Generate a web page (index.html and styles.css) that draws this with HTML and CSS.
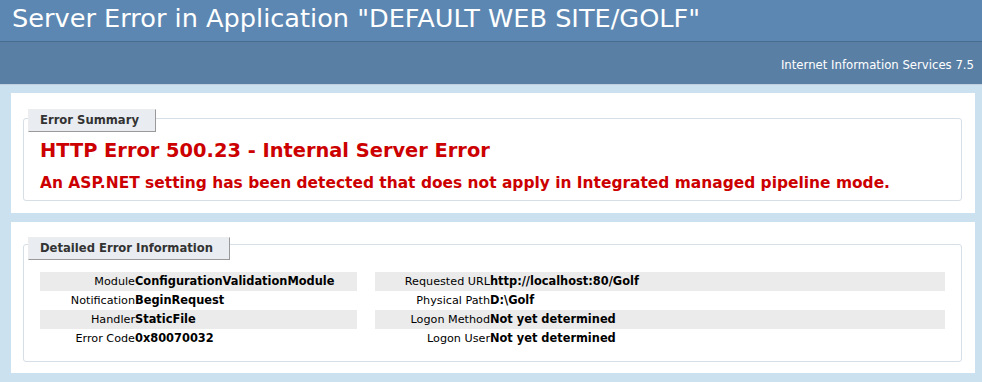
FILE: index.html
```html
<!DOCTYPE html>
<html lang="en">
<head>
  <meta charset="UTF-8" />
  <title>IIS 7.5 Detailed Error - 500.23 - Internal Server Error</title>
  <link rel="stylesheet" href="styles.css">
</head>
<body>
  <div id="header">
    <h1>Server Error in Application "DEFAULT WEB SITE/GOLF"</h1>
  </div>
  <div id="server_version">Internet Information Services 7.5</div>

  <div id="content">
    <div class="summary-container">
      <div class="box">
        <div class="legend">Error Summary</div>
        <h2>HTTP Error 500.23 - Internal Server Error</h2>
        <h3>An ASP.NET setting has been detected that does not apply in Integrated managed pipeline mode.</h3>
      </div>
    </div>

    <div class="content-container">
      <div class="box">
        <div class="legend">Detailed Error Information</div>
        <div class="details">
          <table id="details-left">
            <tr class="alt"><th>Module</th><td>ConfigurationValidationModule</td></tr>
            <tr><th>Notification</th><td>BeginRequest</td></tr>
            <tr class="alt"><th>Handler</th><td>StaticFile</td></tr>
            <tr><th>Error Code</th><td>0x80070032</td></tr>
          </table>
          <table id="details-right">
            <tr class="alt"><th>Requested URL</th><td>http://localhost:80/Golf</td></tr>
            <tr><th>Physical Path</th><td>D:\Golf</td></tr>
            <tr class="alt"><th>Logon Method</th><td>Not yet determined</td></tr>
            <tr><th>Logon User</th><td>Not yet determined</td></tr>
          </table>
        </div>
      </div>
    </div>
  </div>
</body>
</html>
```

FILE: styles.css
```css
body {
  margin: 0;
  font-size: 11.2px;
  font-family: "DejaVu Sans", Verdana, sans-serif;
  background: #cbe1ef;
  color: #000;
}

#header {
  background-color: #5c87b2;
  padding: 0 12px 4px 12px;
}

h1 {
  margin: 0;
  font-size: 25.6px;
  font-weight: normal;
  line-height: 37px;
  color: #fff;
  white-space: nowrap;
}

#server_version {
  background-color: #5a7fa5;
  border-top: 1px solid #4a6c8e;
  border-bottom: 1px solid #c1cfdd;
  color: #fff;
  font-size: 11.7px;
  text-align: right;
  line-height: 14px;
  padding: 16px 8px 12px 8px;
  margin-bottom: 8px;
}

#content {
  margin: 0 7px 0 11px;
}

.summary-container,
.content-container {
  background: #fff;
  padding: 25px 13px 12px 12px;
}

.content-container {
  margin-top: 9px;
  padding: 22px 13px 11px 12px;
}

.box {
  display: flex;
  flex-direction: column;
  align-items: flex-start;
  border: 1px solid #d6dee6;
  border-radius: 3px;
  padding: 0 16px 7px 16px;
}

.legend {
  margin: -10px 0 0 -12px;
  padding: 4px 16px 4px 11px;
  font-size: 11.6px;
  line-height: 13px;
  background: #e9edf1;
  border-top: 1px solid #ededed;
  border-left: 1px solid #ededed;
  border-right: 1px solid #999;
  border-bottom: 1px solid #999;
  color: #333;
  font-weight: bold;
}

h2 {
  margin: 7px 0 0 0;
  font-size: 19.4px;
  line-height: 24px;
  color: #cc0000;
}

h3 {
  margin: 10px 0 0 0;
  font-size: 15.45px;
  line-height: 20px;
  color: #cc0000;
  white-space: nowrap;
}

.content-container .box {
  padding-bottom: 13px;
}

.content-container .legend {
  margin-top: -8px;
}

.details {
  align-self: stretch;
  display: flex;
  gap: 18px;
  margin-top: 12px;
}

table {
  border-collapse: collapse;
  border: none;
}

#details-left {
  width: 317px;
}

#details-right {
  flex: 1;
}

th, td {
  padding: 0;
  line-height: 19px;
  vertical-align: top;
  white-space: nowrap;
}

th {
  text-align: right;
  font-weight: normal;
}

td {
  text-align: left;
  font-size: 11.4px;
  font-weight: bold;
}

#details-left th {
  width: 95px;
}

#details-right th {
  width: 115px;
}

tr.alt th,
tr.alt td {
  background-color: #ebebeb;
}
```
